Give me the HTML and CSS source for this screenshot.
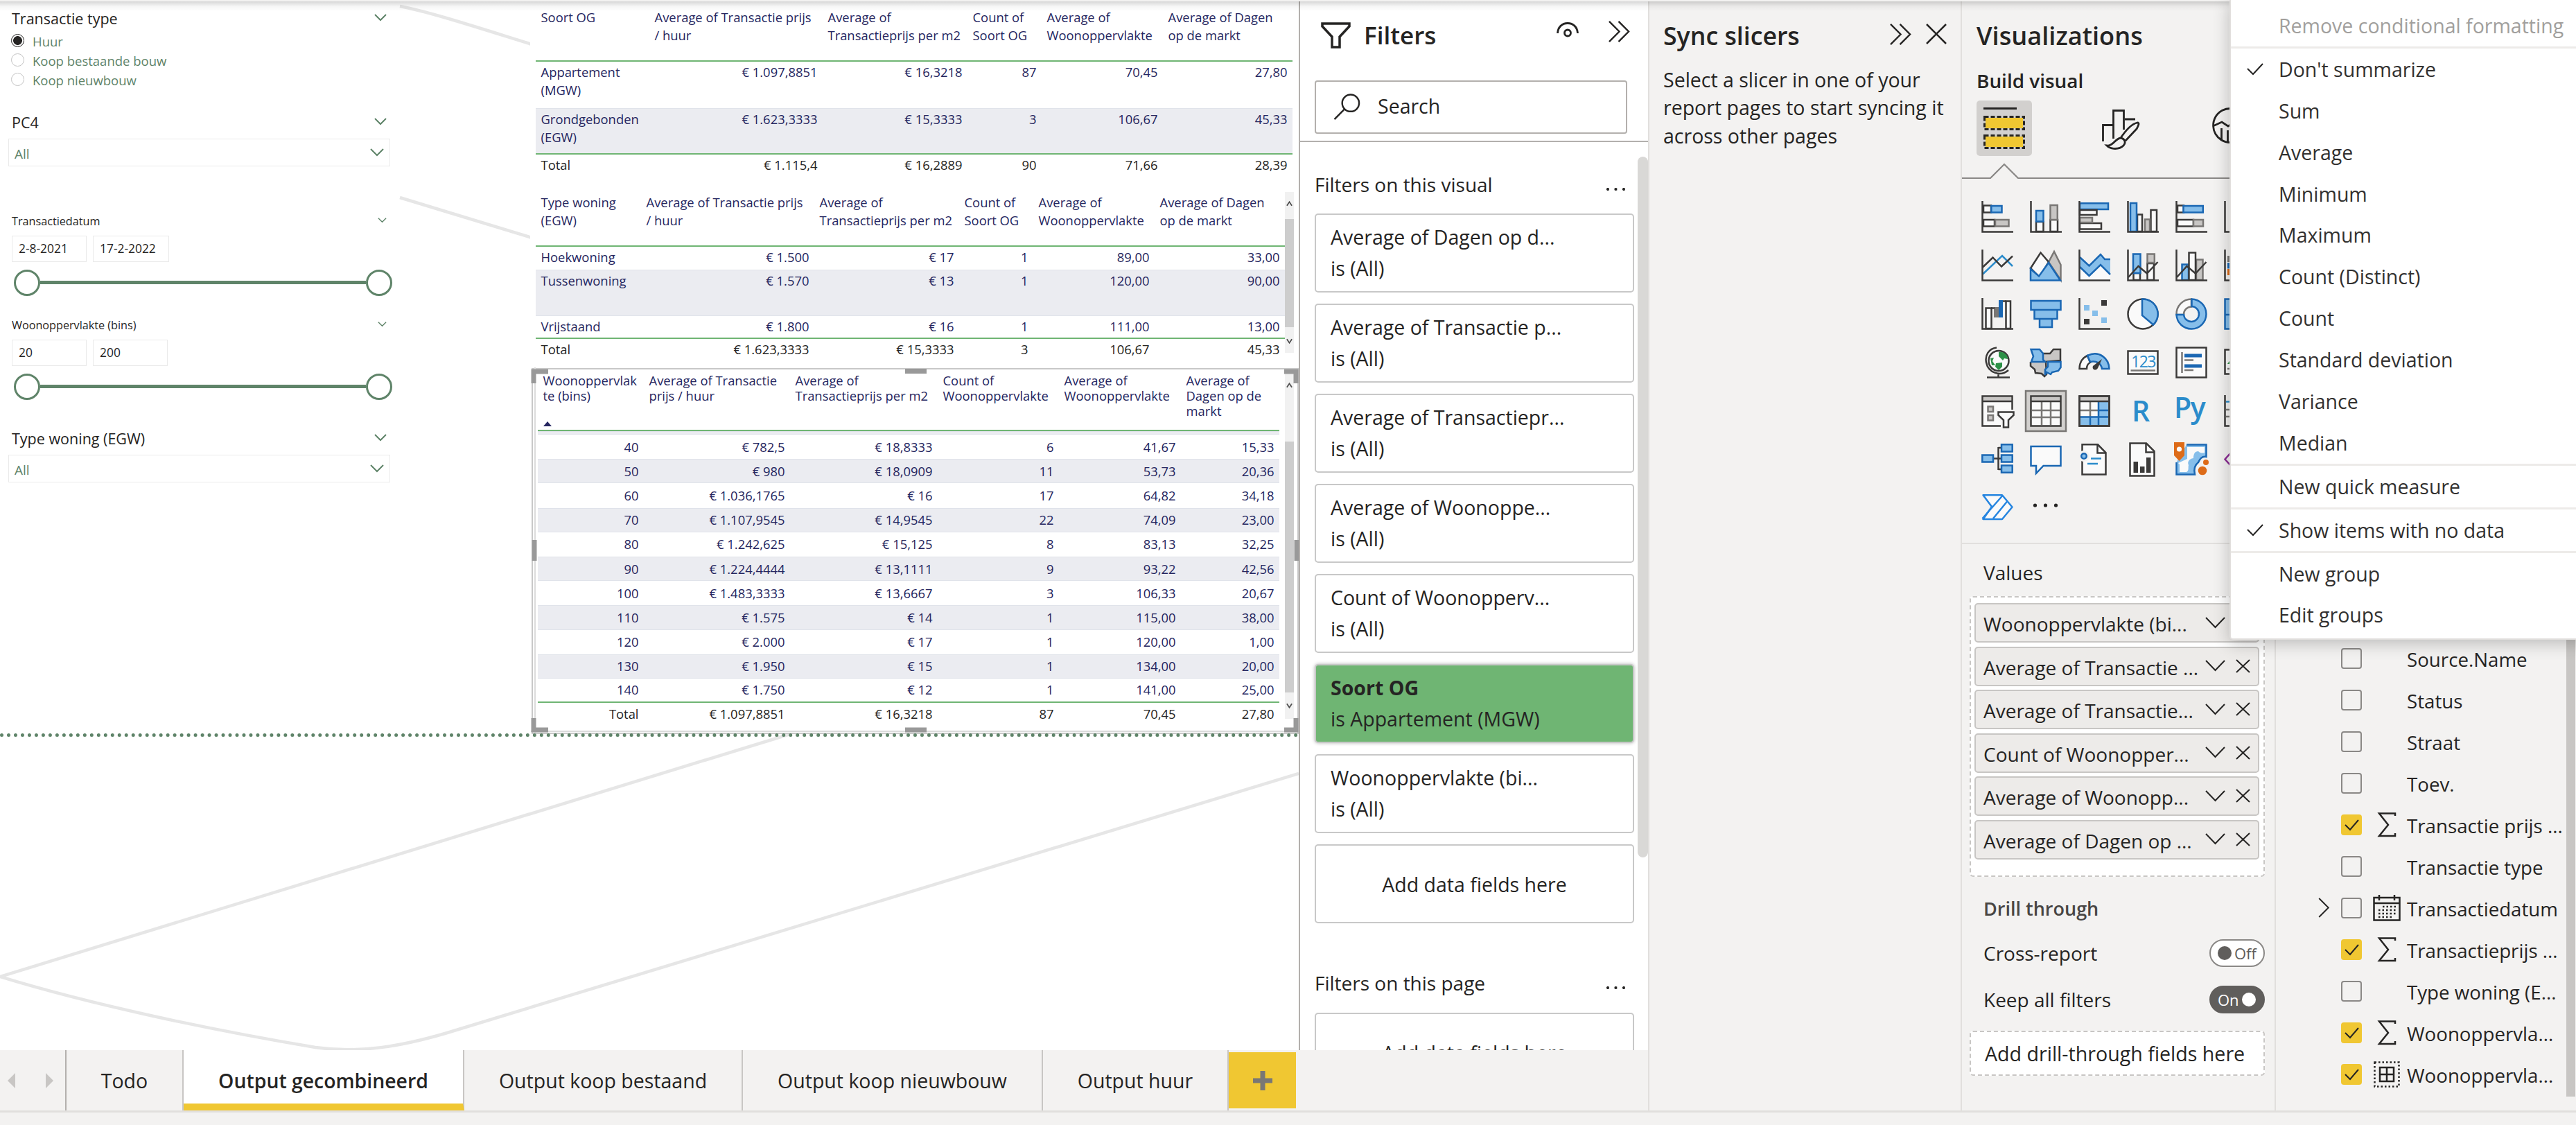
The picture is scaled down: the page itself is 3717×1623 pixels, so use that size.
FILE: index.html
```html
<!DOCTYPE html>
<html lang="en">

<head>
    <meta charset="UTF-8">
    <meta name="viewport" content="width=device-width, initial-scale=1.0">
    <link rel="stylesheet" href="styles.css">
    <title>Output gecombineerd</title>
</head>

<body>
    <div class="app">
        <div class="main">
            <div class="report">
                <div class="canvas">
                    <svg class="swoosh" viewBox="0 0 1874 1515">
                        <path d="M577 9C620 17 690 40 774 66M577 285L774 345" />
                        <path d="M1140 1059L0 1409C130 1449 300 1485 455 1511C520 1520 580 1509 642 1491L1874 1116" />
                    </svg>
                    <div class="slicers">
                        <div class="slicer type">
                            <div class="head">Transactie type<svg class="chev" viewBox="0 0 18 10"><path d="M1 1l8 8 8-8" /></svg></div>
                            <label class="radio on"><i></i>Huur</label>
                            <label class="radio"><i></i>Koop bestaande bouw</label>
                            <label class="radio"><i></i>Koop nieuwbouw</label>
                        </div>
                        <div class="slicer pc4">
                            <div class="head">PC4<svg class="chev" viewBox="0 0 18 10"><path d="M1 1l8 8 8-8" /></svg></div>
                            <div class="drop">All<svg viewBox="0 0 20 11"><path d="M1 1l9 9 9-9" /></svg></div>
                        </div>
                        <div class="slicer datum">
                            <div class="head small">Transactiedatum<svg class="chev" viewBox="0 0 18 10"><path d="M1 1l8 8 8-8" /></svg></div>
                            <div class="inputs"><span>2-8-2021</span><span class="wide">17-2-2022</span></div>
                            <div class="slider"><i></i><b></b><i></i></div>
                        </div>
                        <div class="slicer bins">
                            <div class="head small">Woonoppervlakte (bins)<svg class="chev" viewBox="0 0 18 10"><path d="M1 1l8 8 8-8" /></svg></div>
                            <div class="inputs"><span>20</span><span>200</span></div>
                            <div class="slider"><i></i><b></b><i></i></div>
                        </div>
                        <div class="slicer woning">
                            <div class="head">Type woning (EGW)<svg class="chev" viewBox="0 0 18 10"><path d="M1 1l8 8 8-8" /></svg></div>
                            <div class="drop">All<svg viewBox="0 0 20 11"><path d="M1 1l9 9 9-9" /></svg></div>
                        </div>
                    </div>

                    <div class="visuals">
                        <div class="visual v1">
                            <table>
                                <colgroup><col class="w164"><col class="w250"><col class="w209"><col class="w107"><col class="w175"><col></colgroup>
                                <tr class="th"><th>Soort OG</th><th>Average of Transactie prijs<br>/ huur</th><th>Average of<br>Transactieprijs per m2</th><th>Count of<br>Soort OG</th><th>Average of<br>Woonoppervlakte</th><th>Average of Dagen<br>op de markt</th></tr>
                                <tr class="tall"><td>Appartement<br>(MGW)</td><td>€ 1.097,8851</td><td>€ 16,3218</td><td>87</td><td>70,45</td><td>27,80</td></tr>
                                <tr class="tall alt last"><td>Grondgebonden<br>(EGW)</td><td>€ 1.623,3333</td><td>€ 15,3333</td><td>3</td><td>106,67</td><td>45,33</td></tr>
                                <tr class="total"><td>Total</td><td>€ 1.115,4</td><td>€ 16,2889</td><td>90</td><td>71,66</td><td>28,39</td></tr>
                            </table>
                        </div>

                        <div class="visual v2">
                            <table>
                                <colgroup><col class="w152"><col class="w250"><col class="w209"><col class="w107"><col class="w175"><col></colgroup>
                                <tr class="th"><th>Type woning<br>(EGW)</th><th>Average of Transactie prijs<br>/ huur</th><th>Average of<br>Transactieprijs per m2</th><th>Count of<br>Soort OG</th><th>Average of<br>Woonoppervlakte</th><th>Average of Dagen<br>op de markt</th></tr>
                                <tr class="short"><td>Hoekwoning</td><td>€ 1.500</td><td>€ 17</td><td>1</td><td>89,00</td><td>33,00</td></tr>
                                <tr class="tall alt"><td>Tussenwoning</td><td>€ 1.570</td><td>€ 13</td><td>1</td><td>120,00</td><td>90,00</td></tr>
                                <tr class="short last"><td>Vrijstaand</td><td>€ 1.800</td><td>€ 16</td><td>1</td><td>111,00</td><td>13,00</td></tr>
                                <tr class="total"><td>Total</td><td>€ 1.623,3333</td><td>€ 15,3333</td><td>3</td><td>106,67</td><td>45,33</td></tr>
                            </table>
                            <div class="sb"><svg viewBox="0 0 10 8"><path d="M1 7l4-6 4 6" /></svg><i></i><svg viewBox="0 0 10 8"><path d="M1 1l4 6 4-6" /></svg></div>
                        </div>

                        <div class="visual v3">
                            <table>
                                <colgroup><col class="w153"><col class="w211"><col class="w213"><col class="w175"><col class="w176"><col></colgroup>
                                <tr class="th"><th>Woonoppervlak<br>te (bins)<span class="sort"></span></th><th>Average of Transactie<br>prijs / huur</th><th>Average of<br>Transactieprijs per m2</th><th>Count of<br>Woonoppervlakte</th><th>Average of<br>Woonoppervlakte</th><th>Average of<br>Dagen op de<br>markt</th></tr>
                                <tr class="sliver alt"><td></td><td></td><td></td><td></td><td></td><td></td></tr>
                                <tr><td>40</td><td>€ 782,5</td><td>€ 18,8333</td><td>6</td><td>41,67</td><td>15,33</td></tr>
                                <tr class="alt"><td>50</td><td>€ 980</td><td>€ 18,0909</td><td>11</td><td>53,73</td><td>20,36</td></tr>
                                <tr><td>60</td><td>€ 1.036,1765</td><td>€ 16</td><td>17</td><td>64,82</td><td>34,18</td></tr>
                                <tr class="alt"><td>70</td><td>€ 1.107,9545</td><td>€ 14,9545</td><td>22</td><td>74,09</td><td>23,00</td></tr>
                                <tr><td>80</td><td>€ 1.242,625</td><td>€ 15,125</td><td>8</td><td>83,13</td><td>32,25</td></tr>
                                <tr class="alt"><td>90</td><td>€ 1.224,4444</td><td>€ 13,1111</td><td>9</td><td>93,22</td><td>42,56</td></tr>
                                <tr><td>100</td><td>€ 1.483,3333</td><td>€ 13,6667</td><td>3</td><td>106,33</td><td>20,67</td></tr>
                                <tr class="alt"><td>110</td><td>€ 1.575</td><td>€ 14</td><td>1</td><td>115,00</td><td>38,00</td></tr>
                                <tr><td>120</td><td>€ 2.000</td><td>€ 17</td><td>1</td><td>120,00</td><td>1,00</td></tr>
                                <tr class="alt"><td>130</td><td>€ 1.950</td><td>€ 15</td><td>1</td><td>134,00</td><td>20,00</td></tr>
                                <tr class="last"><td>140</td><td>€ 1.750</td><td>€ 12</td><td>1</td><td>141,00</td><td>25,00</td></tr>
                                <tr class="total"><td>Total</td><td>€ 1.097,8851</td><td>€ 16,3218</td><td>87</td><td>70,45</td><td>27,80</td></tr>
                            </table>
                            <div class="sb"><svg viewBox="0 0 10 8"><path d="M1 7l4-6 4 6" /></svg><i></i><svg viewBox="0 0 10 8"><path d="M1 1l4 6 4-6" /></svg></div>
                            <!-- selection frame with resize handles -->
                            <svg class="frame" viewBox="0 0 1109 530">
                                <path class="line" d="M2 2H1107V528H2Z" />
                                <path class="line inner" d="M6 0V528M0 525H1107" />
                                <path class="grip" d="M4 23V6H25M540 5.500H571M1087 6H1104V23M5 249V279M1105 249V279M4 506V523H25M540 523H571M1087 523H1104V506" />
                            </svg>
                        </div>
                    </div>
                    <div class="page-edge"></div>
                </div>

                <div class="tabs">
                    <div class="nav"><svg viewBox="0 0 70 22"><path d="M12 0V22L1 11ZM56 0V22L67 11Z" /></svg></div>
                    <div class="tab t1">Todo</div>
                    <div class="tab t2 active">Output gecombineerd</div>
                    <div class="tab t3">Output koop bestaand</div>
                    <div class="tab t4">Output koop nieuwbouw</div>
                    <div class="tab t5">Output huur</div>
                    <div class="add"><svg viewBox="0 0 28 28"><path d="M14 0V28M0 14H28" /></svg></div>
                </div>
            </div>

            <div class="filters-col">
                <div class="filters">
                    <div class="title-row">
                        <svg class="funnel" viewBox="0 0 43 38"><path d="M2 2H41V6L27 21V36H16V21L2 6Z" /></svg>
                        <h2>Filters</h2>
                        <svg class="eye" viewBox="0 0 32 22"><path d="M1.500 16C2 7 8 1.500 16 1.500S30 7 30.500 16" /><circle cx="16" cy="15.500" r="4.500" /></svg>
                        <svg class="dbl" viewBox="0 0 32 32"><path d="M1 1l15 15-15 15M15 1l15 15-15 15" /></svg>
                    </div>
                    <div class="search">
                        <svg viewBox="0 0 40 40"><circle cx="25" cy="14" r="12.500" /><path d="M16 23L1 38" /></svg>
                        <span>Search</span>
                    </div>
                    <div class="filter-body">
                        <div class="section">Filters on this visual<i class="dots"></i></div>
                        <div class="card"><p>Average of Dagen op d...</p><p>is (All)</p></div>
                        <div class="card"><p>Average of Transactie p...</p><p>is (All)</p></div>
                        <div class="card"><p>Average of Transactiepr...</p><p>is (All)</p></div>
                        <div class="card"><p>Average of Woonoppe...</p><p>is (All)</p></div>
                        <div class="card"><p>Count of Woonopperv...</p><p>is (All)</p></div>
                        <div class="card green"><p><b>Soort OG</b></p><p>is Appartement (MGW)</p></div>
                        <div class="card"><p>Woonoppervlakte (bi...</p><p>is (All)</p></div>
                        <div class="card empty">Add data fields here</div>
                        <div class="section page">Filters on this page<i class="dots"></i></div>
                        <div class="card empty">Add data fields here</div>
                        <div class="thumb"></div>
                    </div>
                </div>
            </div>

            <div class="sync">
                <div class="title-row">
                    <h2>Sync slicers</h2>
                    <svg class="dbl" viewBox="0 0 32 32"><path d="M1 1l15 15-15 15M15 1l15 15-15 15" /></svg>
                    <svg class="close" viewBox="0 0 30 30"><path d="M1 1l28 28M29 1L1 29" /></svg>
                </div>
                <p>Select a slicer in one of your<br>report pages to start syncing it<br>across other pages</p>
            </div>

            <div class="viz">
                <h2>Visualizations</h2>
                <h3>Build visual</h3>
                <div class="modes">
                    <svg class="mode sel" viewBox="0 0 80 80">
                        <path class="k" d="M10 11.500H58" />
                        <path class="yel" d="M13 25H67V40H13ZM13 52H67V67H13Z" />
                        <rect class="dash" x="11.500" y="23.500" width="57" height="18" />
                        <rect class="dash" x="11.500" y="50.500" width="57" height="18" />
                    </svg>
                    <svg class="mode brush" viewBox="0 0 54 58">
                        <path class="k" d="M1.500 46V22.500H16.500M16.500 42V1.500H31.500V29M33 14H48M7 52C16 53 19 42 27 41C33 42 35 48 31 52C25 58 13 58 7 52ZM27 41C33 32 42 21 51 19C55 19 52 24 50 28L34 45" />
                    </svg>
                    <svg class="mode glass" viewBox="0 0 52 52">
                        <path class="k" d="M26 1.500a24.500 24.500 0 1 0 .1 0M1 27l13-6 9 6 10-6 14 6M13.500 30V46M22.500 33V50" />
                    </svg>
                </div>
                <svg class="notch" viewBox="0 0 450 24"><path d="M0 21H41L61 1L81 21H450" /></svg>

                <div class="icons">
                    <svg viewBox="0 0 46 46"><path class="w d" d="M3 6.500H14V16.500H3ZM3 27H19V36.500H3Z" /><path class="lb b" d="M14.300 7H29.500V16.500H14.300Z" /><path class="lg g" d="M20 27H39.500V36.500H20Z" /><path class="ax" d="M1.500 0V44.500H46" /></svg>
                    <svg viewBox="0 0 46 46"><path class="w d" d="M9 30H19.500V44H9ZM29.500 27H40V44H29.500Z" /><path class="lb b" d="M9 14H19.500V29.500H9Z" /><path class="lg g" d="M29.500 6H39.800V27H29.500Z" /><path class="ax" d="M1.500 0V44.500H46" /></svg>
                    <svg viewBox="0 0 46 46"><path class="lb b" d="M2 3.200H43V12H2Z" /><path class="w d" d="M2 13H26.500V20H2ZM2 32H33V40.500H2Z" /><path class="lg g" d="M2 24H20V31H2Z" /><path class="ax" d="M1.500 0V44.500H46" /></svg>
                    <svg viewBox="0 0 46 46"><path class="w d" d="M15 19.500H22V44H15ZM34.500 13H43V44H34.500Z" /><path class="lb b" d="M5 3H14V44H5Z" /><path class="lg g" d="M26 26.500H33V44H26Z" /><path class="ax" d="M1.500 0V44.500H46" /></svg>
                    <svg viewBox="0 0 46 46"><path class="w d" d="M3 6.500H12V16.500H3ZM3 27H26V36.500H3Z" /><path class="lb b" d="M11.500 7H39.800V16.500H11.500Z" /><path class="lg g" d="M26 27H40V36.500H26Z" /><path class="ax" d="M1.500 0V44.500H46" /></svg>
                    <svg viewBox="0 0 46 46"><path class="ax" d="M1.500 0V44.500H46" /></svg>

                    <svg viewBox="0 0 46 46"><path class="n c" d="M2 35.500L30 9L45 24" /><path class="n d" d="M2 25.500L16.500 11.500L29 24.500L45 9.500" /><path class="ax" d="M1.500 0V44.500H46" /></svg>
                    <svg viewBox="0 0 46 46"><path class="lg g" d="M27 18L35 3L44.500 22V44Z" /><path class="w d" d="M1 27L15.500 4.500L27 18L14 40Z" /><path class="lb b" d="M1 28L13 38.500L27 19L44 44.500H1Z" /></svg>
                    <svg viewBox="0 0 46 46"><path class="w" d="M2 25L15.500 38L32 22L46 36V44H2Z" /><path class="lb" d="M2 11L16 24L32 7L38 14H46V36L32 22L15.500 38L2 25Z" /><path class="n b" d="M2 11L15.500 23.500L32 7L38 14H46M46 36L32 22L15.500 38L2 25" /><path class="ax" d="M1.500 0V44.500H46" /></svg>
                    <svg viewBox="0 0 46 46"><path class="w d" d="M9.500 34H19V44H9.500ZM29.500 20H39V44H29.500Z" /><path class="lb b" d="M9 6.500H19.500V34H9Z" /><path class="lg g" d="M29.500 6.500H39.800V19H29.500Z" /><path class="n d" d="M2 40L16.500 24L29 34.500L44.500 18" /><path class="ax" d="M1.500 0V44.500H46" /></svg>
                    <svg viewBox="0 0 46 46"><path class="lb b" d="M9.500 21.500H19V44H9.500Z" /><path class="lg g" d="M30 14.500H39.500V44H30Z" /><path class="w d" d="M19.500 4.500H29V44H19.500Z" /><path class="n d" d="M2 40L16.500 24L29 34.500L44.500 18" /><path class="ax" d="M1.500 0V44.500H46" /></svg>
                    <svg viewBox="0 0 46 46"><path class="fg" d="M5 9H20V18H5Z" /><path class="fb" d="M5 19H20V27.500H5Z" /><path class="fo" d="M5 28H20V37H5Z" /><path class="ax" d="M1.500 0V44.500H46" /></svg>

                    <svg viewBox="0 0 46 46"><path class="w d" d="M6.500 14.500H14.500V44H6.500ZM35.500 4.500H42V44H35.500Z" /><path class="fg" d="M18 13H25V28H18Z" /><path class="fb" d="M25 3H31V28H25Z" /><path class="n d" d="M14 14.500H19M31 4.500H36" /><path class="ax" d="M1.500 0V44.500H46" /></svg>
                    <svg viewBox="0 0 46 46"><path class="lb b" d="M1.500 4H44.500V17H1.500ZM6.500 17H39.500V30H6.500ZM14 30H32V42H14Z" /></svg>
                    <svg viewBox="0 0 46 46"><path class="fl" d="M8 10h8v8h-8zM20 18h8v8h-8zM33 28h8v8h-8z" /><path class="fd" d="M33 3h8v8h-8zM8 30h8v8h-8z" /><path class="ax" d="M1.500 0V44.500H46" /></svg>
                    <svg viewBox="0 0 46 46"><circle class="w d" cx="23" cy="23" r="21.500" /><path class="lb b" d="M22 1.500A21.500 21.500 0 0 1 38 38.500L22 25Z" /></svg>
                    <svg viewBox="0 0 46 46"><path class="w g" d="M1.500 24A21.500 21.500 0 0 1 23 1.500V12.500A11 11 0 0 0 12 24Z" /><path class="lb b" d="M23.500 1.500A21.500 21.500 0 1 1 1.500 24H12A11 11 0 1 0 23.500 12Z" /></svg>
                    <svg viewBox="0 0 46 46"><path class="lb b" d="M1.500 1.500H44V44.500H1.500ZM1 24H44" /></svg>

                    <svg viewBox="0 0 46 46"><circle class="w d" cx="25" cy="20.500" r="14.500" /><path class="gr" d="M25 8C33 7 38 12 38 18L33 17L31 20L25 14ZM13 17L18 16L16 21L20 27L15 27ZM21 24L30 23L30 29L25 34L20 29Z" /><path class="n d" d="M22 1.500C10 3 5 13 7 23C10 38 28 44 39 34M24.500 39V44M8 44.500H41" /></svg>
                    <svg viewBox="0 0 46 46"><path class="lg d" d="M1 22V28L7 33L8 38L17 39L21 43L24 40L23 22L44 20V4H34L29 10H18" /><path class="lb b" d="M1.500 4H14L19 10V19L22 22H2L5 14ZM26 22H44.500V30L41 35L32 37L30 40L24 37L22 41V33L26 29Z" /></svg>
                    <svg viewBox="0 0 46 46"><path class="w d" d="M1.500 32C1.500 23 6 16 13 13L17 23C13 25 12 28 12 32Z" /><path class="lb b" d="M13 13C30 5 44 17 44.500 32H34C33 25 27 20 17 22Z" /><path class="fd" d="M34 18L28 31C25 36 19 33 21 28Z" /></svg>
                    <svg viewBox="0 0 46 46"><path class="w d" d="M1.500 6.500H44.500V39.500H1.500Z" /><text class="num" x="6" y="30">123</text><path class="n g" d="M5.500 34.500H41" /></svg>
                    <svg viewBox="0 0 46 46"><path class="w d" d="M1.500 1.500H44.500V44.500H1.500Z" /><path class="n g" d="M9.500 8V38M13 19.500H26M13 34H26" /><path class="n b thick" d="M13 13H38M13 28H38" /></svg>
                    <svg viewBox="0 0 46 46"><path class="w d" d="M1.500 4.500H44V39.500H1.500Z" /><path class="gr" d="M5 25L10 18V25Z" /><path class="n g" d="M5 32H20" /></svg>

                    <svg viewBox="0 0 46 46"><path class="w d" d="M1.500 1.500H44.500V44.500H1.500Z" /><path class="fs" d="M3 3H43V8.500H3Z" /><path class="n d" d="M2 9H44" /><path class="lg g" d="M9.500 16.500H17V24H9.500ZM9.500 29H17V36.500H9.500Z" /><path class="bgf" d="M21 21H50V50H28V38L21 30Z" /><path class="w d" d="M24.500 24.500H46.500V29L39 36V46.500H32V36L24.500 29Z" /></svg>
                    <svg viewBox="0 0 46 46"><path class="selbox" d="M-6 -6H52V52H-6Z" /><path class="w d" d="M1.500 1.500H44.500V44.500H1.500Z" /><path class="fs" d="M3 3H43V8.500H3Z" /><path class="n g" d="M3 22H43M3 32H43M17 10V43M30 10V43" /><path class="n d" d="M2 9H44" /></svg>
                    <svg viewBox="0 0 46 46"><path class="w d" d="M1.500 1.500H44.500V44.500H1.500Z" /><path class="fs" d="M3 3H43V8.500H3Z" /><path class="fl" d="M29 10H43V43H3V31H29Z" /><path class="n g" d="M3 22H29M17 10V31" /><path class="n b" d="M29 10V43M3 31.500H43M29 22H43M17 32V43" /><path class="n d" d="M2 9H44M1.500 1.500H44.500V44.500H1.500Z" /></svg>
                    <svg viewBox="0 0 46 46"><text class="r" x="7" y="38">R</text></svg>
                    <svg viewBox="0 0 46 46"><text class="r py" x="-2" y="33">Py</text></svg>
                    <svg viewBox="0 0 46 46"><path class="n c" d="M3 9.500H20" /><path class="n g" d="M3 21H20M3 31H20" /><path class="ax" d="M1.500 0V44.500H46" /></svg>

                    <svg viewBox="0 0 46 46"><path class="n d" d="M18 21.500H28M24.500 6H28M24.500 37H28M24.500 5V38" /><path class="lb b" d="M1.300 16.500H17V26.500H1.300ZM29 1.300H44.700V11.500H29ZM29 16.500H44.700V26.500H29ZM29 31.500H44.700V41.700H29Z" /></svg>
                    <svg viewBox="0 0 46 46"><path class="w b" d="M1.500 4H44.500V32H19.500L9 43V32H1.500Z" /></svg>
                    <svg viewBox="0 0 46 46"><path class="w d" d="M5.500 1.300H28L39.500 13V44.500H5.500Z" /><path class="n d" d="M27.500 1V13.500H39.500" /><circle class="bgf" cx="8" cy="18" r="8" /><circle class="lb b" cx="8" cy="18" r="3.800" /><path class="n c" d="M18 21.500H33M13 29H28" /></svg>
                    <svg viewBox="0 0 46 46"><path class="w d" d="M4.500 -0.500H28L39.500 11V46.500H4.500Z" /><path class="n d" d="M27.500 0V12.500H39.500" /><path class="fd" d="M9.500 26H16V42H9.500ZM19 33H25.500V42H19ZM28 20H34.500V42H28Z" /></svg>
                    <svg viewBox="0 0 46 46"><path class="lb b" d="M16 1.500H44.500V19C37 18 35 23 33 27C28 31 26 36 28 44.500H1.500V27" /><path class="w" d="M4 28L6 30V41H16C20 39 18 34 19 31C17 27 19 22 26 21C26 15 28 11 33 11C36 14 39 14 42 13V5H17V22Z" /><path class="fo" d="M-2 -2H13V17L5.500 25L-2 17Z" /><circle class="w" cx="5.500" cy="8" r="3.600" /><circle class="bgf" cx="39" cy="39" r="10" /><circle class="fo" cx="39" cy="39" r="6.300" /><circle class="fo" cx="44" cy="27" r="4" /></svg>
                    <svg viewBox="0 0 46 46"><path class="n pu" d="M10 13L1.500 22.500L10 32" /></svg>

                    <svg viewBox="0 0 46 46"><path class="w pa" d="M2.500 4.300H30L44.500 21.500L30 39H2.500L15 21Z" /><path class="n pa" d="M1.500 38L30.500 5M17 38L37.500 13" /></svg>
                    <svg viewBox="0 0 46 46"><g class="fk"><circle cx="7.500" cy="19" r="2.600" /><circle cx="22.500" cy="19" r="2.600" /><circle cx="37.500" cy="19" r="2.600" /></g></svg>
                </div>

                <div class="values">Values</div>
                <div class="well">
                    <div class="pill">Woonoppervlakte (bi...<svg class="pc" viewBox="0 0 29 16"><path d="M1 1l13.500 14L28 1" /></svg><svg class="px" viewBox="0 0 21 20"><path d="M1 1l19 18M20 1L1 19" /></svg></div>
                    <div class="pill">Average of Transactie ...<svg class="pc" viewBox="0 0 29 16"><path d="M1 1l13.500 14L28 1" /></svg><svg class="px" viewBox="0 0 21 20"><path d="M1 1l19 18M20 1L1 19" /></svg></div>
                    <div class="pill">Average of Transactie...<svg class="pc" viewBox="0 0 29 16"><path d="M1 1l13.500 14L28 1" /></svg><svg class="px" viewBox="0 0 21 20"><path d="M1 1l19 18M20 1L1 19" /></svg></div>
                    <div class="pill">Count of Woonopper...<svg class="pc" viewBox="0 0 29 16"><path d="M1 1l13.500 14L28 1" /></svg><svg class="px" viewBox="0 0 21 20"><path d="M1 1l19 18M20 1L1 19" /></svg></div>
                    <div class="pill">Average of Woonopp...<svg class="pc" viewBox="0 0 29 16"><path d="M1 1l13.500 14L28 1" /></svg><svg class="px" viewBox="0 0 21 20"><path d="M1 1l19 18M20 1L1 19" /></svg></div>
                    <div class="pill">Average of Dagen op ...<svg class="pc" viewBox="0 0 29 16"><path d="M1 1l13.500 14L28 1" /></svg><svg class="px" viewBox="0 0 21 20"><path d="M1 1l19 18M20 1L1 19" /></svg></div>
                </div>
                <div class="drill">Drill through</div>
                <div class="opt">Cross-report<span class="toggle"><i></i>Off</span></div>
                <div class="opt">Keep all filters<span class="toggle on">On<i></i></span></div>
                <div class="well add-drill">Add drill-through fields here</div>
            </div>

            <div class="fields">
                <div class="field"><i class="cb"></i><em></em>Source.Name</div>
                <div class="field"><i class="cb"></i><em></em>Status</div>
                <div class="field"><i class="cb"></i><em></em>Straat</div>
                <div class="field"><i class="cb"></i><em></em>Toev.</div>
                <div class="field"><i class="cb on"><svg viewBox="0 0 30 30"><path d="M6 15l7 7L25 8" /></svg></i><em><svg class="sigma" viewBox="0 0 26 36"><path d="M25 5V1.500H2L15 18L2 34H25V30" /></svg></em>Transactie prijs ...</div>
                <div class="field"><i class="cb"></i><em></em>Transactie type</div>
                <div class="field"><svg class="exp" viewBox="0 0 17 30"><path d="M1 1l14 14L1 29" /></svg><i class="cb"></i><em><svg class="cal" viewBox="0 0 40 38"><path d="M1.500 4H38.500V36.500H1.500ZM1.500 12H38.500M9 0V8M31 0V8" /><path class="dot" d="M14 17H34M8 22H34M8 27H34M8 32H28" /></svg></em>Transactiedatum</div>
                <div class="field"><i class="cb on"><svg viewBox="0 0 30 30"><path d="M6 15l7 7L25 8" /></svg></i><em><svg class="sigma" viewBox="0 0 26 36"><path d="M25 5V1.500H2L15 18L2 34H25V30" /></svg></em>Transactieprijs ...</div>
                <div class="field"><i class="cb"></i><em></em>Type woning (E...</div>
                <div class="field"><i class="cb on"><svg viewBox="0 0 30 30"><path d="M6 15l7 7L25 8" /></svg></i><em><svg class="sigma" viewBox="0 0 26 36"><path d="M25 5V1.500H2L15 18L2 34H25V30" /></svg></em>Woonoppervla...</div>
                <div class="field"><i class="cb on"><svg viewBox="0 0 30 30"><path d="M6 15l7 7L25 8" /></svg></i><em><svg class="cal" viewBox="0 0 38 38"><path class="dot" d="M1.500 1.500H36.500V36.500H1.500Z" /><path d="M9 9H29V29H9ZM19 9V29M9 19H29" /></svg></em>Woonoppervla...</div>
                <div class="fthumb"></div>
            </div>
        </div>
        <div class="status"></div>
        <div class="topline"></div>

        <div class="menu">
            <div class="item off">Remove conditional formatting</div>
            <hr>
            <div class="item"><svg viewBox="0 0 24 17"><path d="M1 8l8 8L23 1" /></svg>Don't summarize</div>
            <div class="item">Sum</div>
            <div class="item">Average</div>
            <div class="item">Minimum</div>
            <div class="item">Maximum</div>
            <div class="item">Count (Distinct)</div>
            <div class="item">Count</div>
            <div class="item">Standard deviation</div>
            <div class="item">Variance</div>
            <div class="item">Median</div>
            <hr>
            <div class="item">New quick measure</div>
            <hr>
            <div class="item"><svg viewBox="0 0 24 17"><path d="M1 8l8 8L23 1" /></svg>Show items with no data</div>
            <hr>
            <div class="item">New group</div>
            <div class="item">Edit groups</div>
        </div>
    </div>
</body>

</html>
```
FILE: styles.css
```css
* {
    box-sizing: border-box;
}

body {
    margin: 0;
    background: #f3f2f1;
    color: #252423;
    font-family: "Open Sans", "Noto Sans", sans-serif;
    font-size: 28.5px;
}

h2, h3, p {
    margin: 0;
    font-weight: 600;
}

p {
    font-weight: 400;
}

svg {
    display: block;
    flex: none;
    overflow: visible;
    fill: none;
    stroke: #252423;
    stroke-width: 2;
}

.app {
    position: relative;
    width: 3717px;
    height: 1623px;
    overflow: hidden;
    white-space: nowrap;
}

.main {
    display: flex;
    height: 1602px;
}

.status {
    height: 21px;
    border-top: 3px solid #e1dfdd;
}

.topline {
    position: absolute;
    left: 0;
    top: 0;
    width: 100%;
    height: 16px;
    border-top: 2px solid #f3f2f1;
    background: linear-gradient(rgba(0, 0, 0, 0.16), rgba(0, 0, 0, 0.04) 50%, rgba(0, 0, 0, 0));
}

/* report canvas */
.report {
    width: 1874px;
}

.canvas {
    position: relative;
    display: flex;
    height: 1515px;
    background: #fff;
    overflow: hidden;
}

.swoosh {
    position: absolute;
    left: 0;
    top: 0;
    width: 1874px;
    height: 1515px;
    stroke: #e6e6e6;
    stroke-width: 4.5;
}

.page-edge {
    position: absolute;
    left: 0;
    top: 1058px;
    width: 1874px;
    border-top: 5px dotted #5f8469;
}

.slicers {
    width: 765px;
}

.slicer {
    padding-left: 17px;
}

.type {
    height: 159px;
    padding-top: 9px;
}

.pc4 {
    height: 143px;
}

.datum {
    height: 150px;
}

.bins {
    height: 163px;
}

.head {
    display: flex;
    justify-content: space-between;
    align-items: center;
    width: 541px;
    height: 36px;
    padding-bottom: 2px;
    font-size: 21.5px;
}

.head.small {
    font-size: 16.2px;
}

.chev {
    width: 18px;
    height: 10px;
    margin-top: -3px;
    stroke: #5f8469;
}

.small .chev {
    width: 13px;
    height: 7px;
}

.radio {
    display: flex;
    align-items: center;
    height: 28.2px;
    color: #5f8469;
    font-size: 18.5px;
}

.radio i {
    width: 19px;
    height: 19px;
    margin: -2px 12px 0 -1px;
    border: 1.5px solid #c4c4c4;
    border-radius: 50%;
}

.radio.on i {
    border: 1.5px solid #252423;
    background: radial-gradient(#252423 0 6px, #fff 6.8px);
}

.drop {
    display: flex;
    justify-content: space-between;
    align-items: center;
    width: 551px;
    height: 40px;
    margin: 5px 0 0 -5px;
    padding: 4px 8px 0 8px;
    border: 1.5px solid #eaeaea;
    color: #5f8469;
    font-size: 19px;
}

.drop svg {
    width: 20px;
    height: 11px;
    margin-top: -6px;
    stroke: #5f8469;
}

.inputs {
    display: flex;
    gap: 9px;
    margin-top: 2px;
}

.inputs span {
    width: 108px;
    height: 38px;
    padding-left: 9px;
    border: 1.5px solid #eaeaea;
    font-size: 17.4px;
    line-height: 35px;
}

.inputs .wide {
    width: 110px;
}

.slider {
    display: flex;
    align-items: center;
    width: 546px;
    height: 39px;
    margin: 10px 0 0 3px;
}

.slider i {
    width: 38px;
    height: 38px;
    border: 3px solid #5f8469;
    border-radius: 50%;
    background: #fff;
}

.slider b {
    flex: 1;
    height: 5px;
    background: #5f8469;
}

/* tables */
.visuals {
    position: relative;
    width: 1109px;
    height: 1058px;
    background: #fff;
    border-left: 1px solid #fff;
}

.visual {
    position: relative;
    display: flex;
    align-items: flex-start;
}

.v1 {
    height: 267px;
    margin-top: 10px;
    padding-left: 7px;
}

.v2 {
    height: 253px;
    padding-left: 7px;
}

.v3 {
    height: 528px;
    padding: 5px 0 0 10px;
}

table {
    table-layout: fixed;
    border-collapse: separate;
    border-spacing: 0;
    color: #252660;
    font-size: 18.4px;
    line-height: 26px;
}

.v1 table { width: 1092px; }
.v2 table { width: 1081px; height: 243px; }
.v3 table { width: 1070px; }
.w164 { width: 164px; }
.w152 { width: 152px; }
.w153 { width: 153px; }
.w250 { width: 250px; }
.w209 { width: 209px; }
.w211 { width: 211px; }
.w213 { width: 213px; }
.w107 { width: 107px; }
.w175 { width: 175px; }
.w176 { width: 176px; }

th, td {
    padding: 2px 7.5px 0;
    font-weight: 400;
    text-align: left;
    vertical-align: top;
}

td {
    text-align: right;
}

.v1 td:first-child,
.v2 td:first-child {
    text-align: left;
}

th {
    height: 79px;
    border-bottom: 2px solid #6fb573;
}

.tall td {
    height: 67px;
}

.short td {
    height: 33px;
}

.alt td {
    background: #ebecf1;
    border-top: 1.5px solid #e0e3ea;
    border-bottom: 1.5px solid #e0e3ea;
}

.last td,
.alt.last td {
    border-bottom: 2px solid #6fb573;
}

.total td {
    height: 32px;
    color: #252423;
}

.v3 th {
    height: 87px;
    line-height: 22px;
    padding-top: 3px;
}

.v3 td {
    height: 35.2px;
    padding-top: 0;
    vertical-align: middle;
}

.v3 .sliver td {
    height: 5px;
    padding: 0;
    line-height: 0;
}

.v3 .total td {
    height: 32px;
}

.sort {
    display: block;
    width: 0;
    margin-top: 26px;
    border: 6.5px solid transparent;
    border-top: 0;
    border-bottom: 7px solid #252660;
}

.sb {
    display: flex;
    flex-direction: column;
    align-items: center;
    width: 13px;
    height: 232px;
    background: #f1f1f1;
    padding: 13px 0;
}

.sb svg {
    width: 9px;
    height: 8px;
    stroke: #505050;
}

.sb i {
    flex: 1;
    width: 13px;
    margin: 18px 0 16px;
    background: #cdcdcd;
}

.v3 .sb {
    height: 500px;
    margin: 2px 0 0 8px;
    padding: 15px 0;
}

.v3 .sb i {
    margin: 77px 0 15px;
}

.frame {
    position: absolute;
    left: 0;
    top: 0;
    width: 1109px;
    height: 530px;
}

.frame .line {
    stroke: #c8c8c8;
    stroke-width: 2;
}

.frame .inner {
    stroke: #dcdcdc;
}

.frame .grip {
    stroke: #999;
    stroke-width: 7;
}

/* page tabs */
.tabs {
    display: flex;
    height: 87px;
}

.nav {
    width: 96px;
    padding: 33px 0 0 10px;
    border-right: 2px solid #b3b0ad;
}

.nav svg {
    width: 70px;
    height: 22px;
    fill: #c8c6c4;
    stroke: none;
}

.tab {
    border-right: 2px solid #c8c6c4;
    line-height: 88px;
    text-align: center;
    font-size: 28.5px;
}

.t1 { width: 169px; }
.t2 { width: 405px; }
.t3 { width: 402px; }
.t4 { width: 433px; }
.t5 { width: 268px; }

.active {
    background: #fff;
    border-bottom: 10px solid #f0c732;
    font-weight: 600;
    font-size: 28.4px;
}

.add {
    display: flex;
    align-items: center;
    justify-content: center;
    width: 97px;
    height: 81px;
    margin-top: 3px;
    background: #f0c732;
}

.add svg {
    width: 28px;
    height: 28px;
    stroke: #797775;
    stroke-width: 7;
}

/* filters pane */
.filters-col {
    width: 504px;
}

.filters {
    height: 1515px;
    overflow: hidden;
    background: #fff;
    border-left: 2px solid #b3b0ad;
}

h2 {
    font-size: 35.7px;
    line-height: 50px;
}

.title-row {
    display: flex;
    align-items: flex-start;
}

.filters .title-row {
    height: 116px;
    padding: 26px 0 0 30px;
}

.funnel {
    width: 43px;
    height: 38px;
    margin: 6px 19px 0 0;
    stroke-width: 3.5;
}

.filters h2 {
    font-size: 35px;
}

.eye {
    width: 32px;
    height: 22px;
    margin: 6px 0 0 auto;
    stroke-width: 2.8;
}

.dbl {
    width: 31px;
    height: 31px;
    stroke-width: 2.5;
}

.filters .dbl {
    margin: 4px 26px 0 43px;
}

.search {
    display: flex;
    align-items: center;
    width: 451px;
    height: 77px;
    margin-left: 21px;
    padding-left: 25px;
    border: 2px solid #b3b0ad;
    border-radius: 4px;
}

.search span {
    padding-bottom: 3px;
}

.search svg {
    width: 40px;
    height: 39px;
    margin-right: 24px;
    stroke-width: 2.5;
}

.filter-body {
    position: relative;
    height: 1320px;
    margin-top: 10px;
    padding-left: 21px;
    border-top: 2px solid #b3b0ad;
}

.section {
    display: flex;
    align-items: center;
    justify-content: space-between;
    width: 449px;
    height: 103px;
    padding-top: 18px;
    font-size: 28px;
}

.page {
    height: 113px;
    padding-top: 26px;
}

.dots {
    width: 28px;
    height: 4px;
    margin-top: 14px;
    background: radial-gradient(circle at 2px 2px, #252423 1.8px, transparent 2.3px) 0 0 / 11.5px 4px;
}

.card {
    width: 461px;
    height: 114px;
    margin-bottom: 16px;
    padding: 10px 0 0 21px;
    border: 2px solid #c8c8c8;
    border-radius: 5px;
    line-height: 44.5px;
}

.green {
    background: #6fb573;
    box-shadow: 0 0 5px rgba(0, 0, 0, 0.3);
}

.empty {
    padding: 0;
    line-height: 112px;
    text-align: center;
}

.thumb {
    position: absolute;
    right: 0;
    top: 21px;
    width: 15px;
    height: 1011px;
    border-radius: 8px;
    background: #d9d8d6;
}

/* sync slicers pane */
.sync {
    width: 451px;
    padding: 26px 0 0 20px;
    border-left: 2px solid #e1dfdd;
    font-size: 28.5px;
    line-height: 40.3px;
}

.sync .title-row {
    height: 69px;
}

.sync .dbl {
    margin: 8px 21px 0 auto;
}

.close {
    width: 30px;
    height: 30px;
    margin: 8px 20px 0 0;
    stroke-width: 2.5;
}

/* visualizations pane */
.viz {
    width: 453px;
    padding-top: 26px;
    border-left: 2px solid #e1dfdd;
    font-size: 28px;
}

.viz h2,
.viz h3 {
    padding-left: 21px;
}

.viz h2 {
    font-size: 36.2px;
}

.viz h3 {
    height: 69px;
    padding-top: 15px;
    font-size: 27.9px;
    line-height: 50px;
}

.modes {
    display: flex;
    height: 80px;
    padding-left: 21px;
}

.mode.sel {
    width: 80px;
    height: 80px;
    border-radius: 5px;
    background: #d2d0ce;
}

.brush {
    width: 54px;
    height: 58px;
    margin: 13px 105px 0 101px;
}

.glass {
    width: 52px;
    height: 52px;
    margin-top: 10px;
}

.k {
    stroke-width: 2.8;
}

.dash {
    stroke-width: 3;
    stroke-dasharray: 6 3;
}

.yel {
    fill: #f0c732;
    stroke: none;
}

.notch {
    width: 450px;
    height: 24px;
    margin-top: 11px;
    stroke: #8a8886;
    stroke-width: 2.2;
}

.icons {
    display: grid;
    grid-template-columns: repeat(6, 70px);
    grid-auto-rows: 70px;
    height: 525px;
    padding: 30px 0 0 28px;
    border-bottom: 2px solid #e1dfdd;
}

.icons svg {
    width: 46px;
    height: 46px;
    stroke: none;
}

.icons path,
.icons circle {
    stroke-width: 2.5;
}

.ax, .icons .d { stroke: #3b3a39; }
.icons .b { stroke: #1a67b3; }
.icons .g { stroke: #797775; }
.icons .c { stroke: #2b8ccb; }
.icons .pu { stroke: #8b2a94; }
.icons .pa { stroke: #2585e0; stroke-linejoin: round; }
.icons .thick { stroke-width: 5; }
.w { fill: #fafafa; }
.lb, .fl { fill: #86beea; }
.lg, .fs { fill: #c8c6c4; }
.fg { fill: #797775; }
.fb { fill: #1a67b3; }
.fo { fill: #dd6b18; }
.fd { fill: #3b3a39; }
.fk { fill: #252423; }
.gr { fill: #2d9147; }
.bgf { fill: #f3f2f1; }

.selbox {
    fill: #d2d0ce;
    stroke: #797775;
}

.num {
    fill: #2b8ccb;
    font-size: 23px;
    letter-spacing: -1.5px;
}

.r {
    fill: #2b8ccb;
    font-size: 41px;
    font-weight: 600;
}

.py {
    letter-spacing: -1.5px;
}

.values {
    height: 75px;
    padding-left: 31px;
    line-height: 83px;
}

.well {
    width: 426px;
    height: 405px;
    margin-left: 11px;
    padding: 8px 5px;
    border: 2px dashed #c8c6c4;
    border-radius: 5px;
    background: #fff;
}

.pill {
    position: relative;
    display: flex;
    align-items: center;
    width: 411px;
    height: 57px;
    margin-bottom: 5.6px;
    padding: 3px 0 0 11px;
    border: 2px solid #c8c6c4;
    border-radius: 5px;
    background: #edebe9;
}

.pc {
    width: 29px;
    height: 16px;
    margin: -5px 15px 0 auto;
}

.px {
    width: 21px;
    height: 20px;
    margin: -4px 11px 0 0;
}

.drill {
    height: 76px;
    padding-left: 31px;
    color: #484644;
    font-weight: 600;
    font-size: 27px;
    line-height: 92px;
}

.opt {
    display: flex;
    align-items: center;
    justify-content: space-between;
    width: 437px;
    height: 67px;
    padding-left: 31px;
}

.toggle {
    display: flex;
    align-items: center;
    gap: 4px;
    width: 80px;
    height: 40px;
    padding-left: 10px;
    border: 2px solid #8a8886;
    border-radius: 20px;
    background: #fff;
    color: #605e5c;
    font-size: 22px;
}

.toggle i {
    width: 20px;
    height: 20px;
    border-radius: 50%;
    background: #605e5c;
}

.toggle.on {
    border-color: #605e5c;
    background: #605e5c;
    color: #fff;
}

.toggle.on i {
    background: #fff;
}

.add-drill {
    height: 65px;
    margin-top: 12px;
    padding: 0 0 0 20px;
    font-size: 28.6px;
    line-height: 62px;
}

/* fields pane */
.fields {
    position: relative;
    width: 434px;
    padding-top: 921px;
    border-left: 2px solid #e1dfdd;
    font-size: 27.7px;
}

.field {
    display: flex;
    align-items: center;
    height: 60px;
    padding-left: 94px;
}

.cb {
    width: 30px;
    height: 30px;
    margin-top: -3px;
    border: 2px solid #8a8886;
    border-radius: 4px;
}

.cb.on {
    border: 0;
    background: #f0c732;
}

.field em {
    display: flex;
    justify-content: center;
    width: 65px;
    padding-left: 6px;
    margin-top: -3px;
}

.exp {
    width: 17px;
    height: 29px;
    margin: -4px 16px 0 -33px;
}

.sigma {
    width: 26px;
    height: 36px;
    stroke-width: 2.5;
}

.cal {
    width: 40px;
    height: 38px;
    stroke-width: 2.5;
}

.dot {
    stroke-dasharray: 2.5 3;
}

.fthumb {
    position: absolute;
    right: 0;
    top: 900px;
    width: 13px;
    height: 682px;
    background: #c8c6c4;
}

/* context menu */
.menu {
    position: absolute;
    left: 3217px;
    top: 0;
    width: 520px;
    height: 923px;
    padding-top: 7px;
    border: 2px solid #e1dfdd;
    border-top: 0;
    border-radius: 0 0 0 5px;
    background: #fff;
    box-shadow: 0 5px 24px rgba(0, 0, 0, 0.24);
}

.item {
    display: flex;
    align-items: center;
    height: 59.9px;
    padding-left: 69px;
    color: #323130;
}

.item svg {
    width: 24px;
    height: 17px;
    margin: 0 22px 0 -46px;
}

.off {
    color: #a19f9d;
}

hr {
    height: 3px;
    margin: 0;
    border: 0;
    background: #edebe9;
}
```
